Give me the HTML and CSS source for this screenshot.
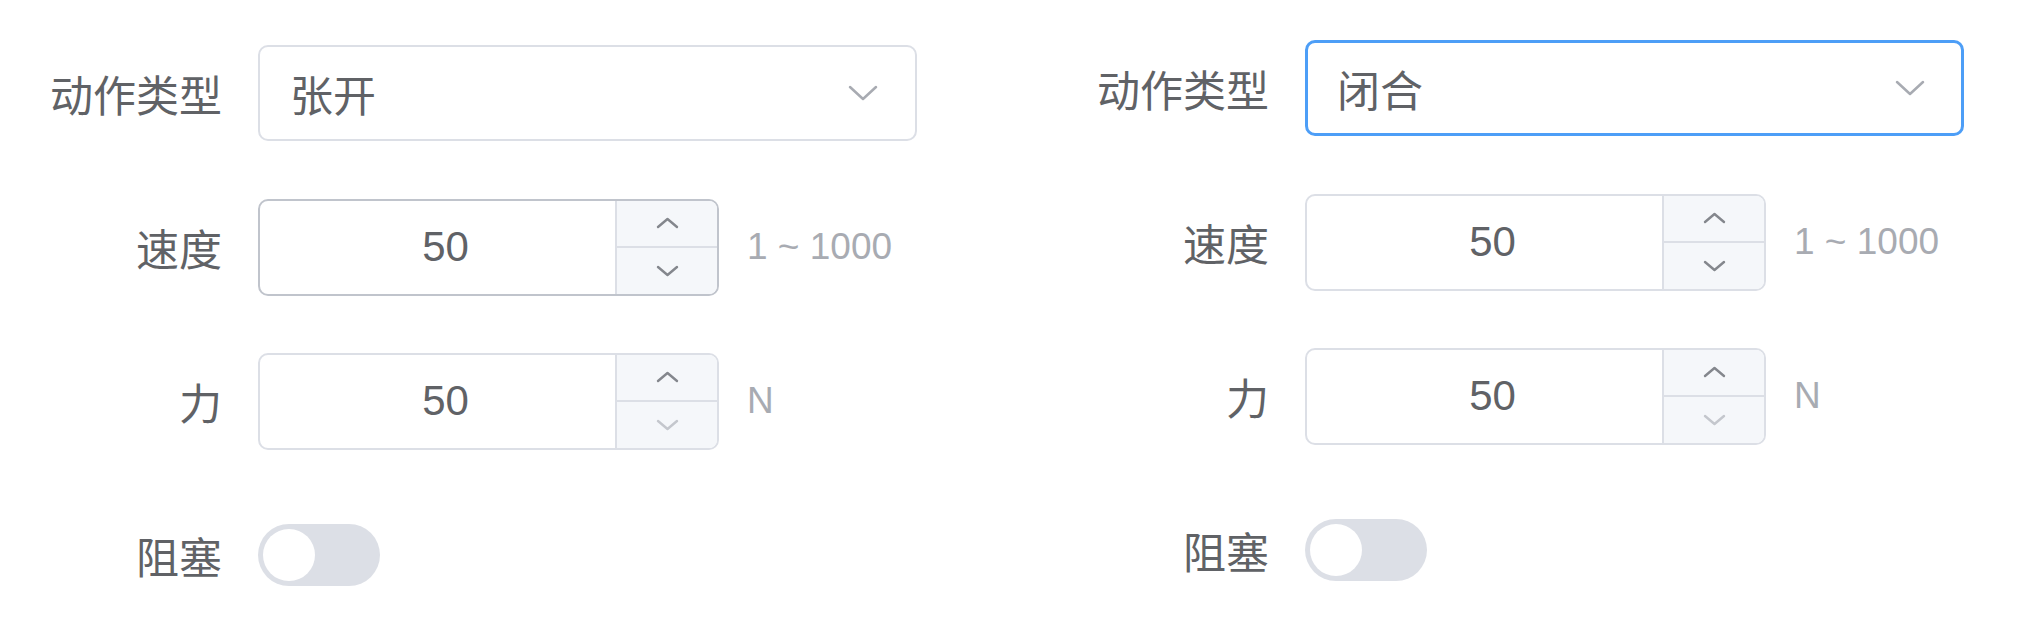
FILE: index.html
```html
<!DOCTYPE html>
<html lang="zh">
<head>
<meta charset="utf-8">
<title>动作设置</title>
<link rel="stylesheet" href="styles.css">
</head>
<body>
<div class="page">
  <form class="panel panel-left">
    <div class="item">
      <label class="label">动作类型</label>
      <div class="select">
        <span class="select-text">张开</span>
        <svg class="select-arrow" viewBox="0 0 30 16" width="30" height="16"><polyline points="2,2 15,14 28,2"/></svg>
      </div>
    </div>
    <div class="item">
      <label class="label">速度</label>
      <div class="number hover">
        <div class="number-input">50</div>
        <div class="controls">
          <div class="ctrl"><svg viewBox="0 0 23 12" width="23" height="12"><polyline points="2,10 11.5,2 21,10"/></svg></div>
          <div class="ctrl"><svg viewBox="0 0 23 12" width="23" height="12"><polyline points="2,2 11.5,10 21,2"/></svg></div>
        </div>
      </div>
      <span class="unit">1 ~ 1000</span>
    </div>
    <div class="item">
      <label class="label">力</label>
      <div class="number">
        <div class="number-input">50</div>
        <div class="controls">
          <div class="ctrl"><svg viewBox="0 0 23 12" width="23" height="12"><polyline points="2,10 11.5,2 21,10"/></svg></div>
          <div class="ctrl light"><svg viewBox="0 0 23 12" width="23" height="12"><polyline points="2,2 11.5,10 21,2"/></svg></div>
        </div>
      </div>
      <span class="unit">N</span>
    </div>
    <div class="item">
      <label class="label">阻塞</label>
      <div class="switch"><span class="knob"></span></div>
    </div>
  </form>
  <form class="panel panel-right">
    <div class="item">
      <label class="label">动作类型</label>
      <div class="select focus">
        <span class="select-text">闭合</span>
        <svg class="select-arrow" viewBox="0 0 30 16" width="30" height="16"><polyline points="2,2 15,14 28,2"/></svg>
      </div>
    </div>
    <div class="item">
      <label class="label">速度</label>
      <div class="number">
        <div class="number-input">50</div>
        <div class="controls">
          <div class="ctrl"><svg viewBox="0 0 23 12" width="23" height="12"><polyline points="2,10 11.5,2 21,10"/></svg></div>
          <div class="ctrl"><svg viewBox="0 0 23 12" width="23" height="12"><polyline points="2,2 11.5,10 21,2"/></svg></div>
        </div>
      </div>
      <span class="unit">1 ~ 1000</span>
    </div>
    <div class="item">
      <label class="label">力</label>
      <div class="number">
        <div class="number-input">50</div>
        <div class="controls">
          <div class="ctrl"><svg viewBox="0 0 23 12" width="23" height="12"><polyline points="2,10 11.5,2 21,10"/></svg></div>
          <div class="ctrl light"><svg viewBox="0 0 23 12" width="23" height="12"><polyline points="2,2 11.5,10 21,2"/></svg></div>
        </div>
      </div>
      <span class="unit">N</span>
    </div>
    <div class="item">
      <label class="label">阻塞</label>
      <div class="switch"><span class="knob"></span></div>
    </div>
  </form>
</div>
</body>
</html>
```

FILE: styles.css
```css
html, body {
  margin: 0;
  padding: 0;
  background: #ffffff;
}

body {
  font-family: "Noto Sans CJK SC", "Liberation Sans", sans-serif;
  color: #606266;
}

.page {
  display: flex;
  align-items: flex-start;
}

.panel {
  display: flex;
  flex-direction: column;
  gap: 58px;
  flex: none;
}

.panel-left {
  width: 1047px;
  padding-top: 45px;
}

.panel-right {
  width: 987px;
  padding-top: 40px;
}

.item {
  display: flex;
  align-items: center;
  height: 96px;
}

.label {
  width: 258px;
  flex: none;
  box-sizing: border-box;
  padding-right: 36px;
  text-align: right;
  font-size: 43px;
  line-height: 1;
  color: #606266;
}

.select {
  width: 659px;
  height: 96px;
  flex: none;
  box-sizing: border-box;
  border: 2px solid #dcdfe6;
  border-radius: 10px;
  display: flex;
  align-items: center;
  padding: 0 37px 0 30px;
}

.select.focus {
  border: 3px solid #4d9ef7;
  padding-left: 29px;
  padding-right: 36px;
}

.select-text {
  flex: 1;
  font-size: 43px;
  line-height: 1;
  color: #606266;
}

.select-arrow polyline {
  fill: none;
  stroke: #a8abb2;
  stroke-width: 2.5;
  stroke-linecap: round;
  stroke-linejoin: round;
}

.number {
  width: 461px;
  height: 97px;
  flex: none;
  box-sizing: border-box;
  border: 2px solid #dcdfe6;
  border-radius: 10px;
  display: flex;
  overflow: hidden;
}

.number.hover {
  border-color: #c0c4cc;
}

.number-input {
  flex: 1;
  display: flex;
  align-items: center;
  justify-content: center;
  padding-left: 30px;
  padding-right: 14px;
  font-family: "Liberation Sans", sans-serif;
  font-size: 42px;
  color: #606266;
}

.controls {
  width: 100px;
  display: flex;
  flex-direction: column;
  border-left: 2px solid #dcdfe6;
  background: #f5f7fa;
}

.ctrl {
  flex: 1;
  display: flex;
  align-items: center;
  justify-content: center;
}

.ctrl + .ctrl {
  border-top: 2px solid #dcdfe6;
}

.ctrl polyline {
  fill: none;
  stroke: #84878d;
  stroke-width: 2.4;
  stroke-linecap: round;
  stroke-linejoin: round;
}

.ctrl.light polyline {
  stroke: #c4c7cd;
}

.unit {
  margin-left: 28px;
  font-family: "Liberation Sans", sans-serif;
  font-size: 37px;
  color: #a8abb2;
}

.switch {
  width: 122px;
  height: 62px;
  flex: none;
  border-radius: 31px;
  background: #dcdfe6;
  box-sizing: border-box;
  padding: 5px;
  display: flex;
  align-items: center;
}

.knob {
  width: 52px;
  height: 52px;
  border-radius: 50%;
  background: #ffffff;
}
```
